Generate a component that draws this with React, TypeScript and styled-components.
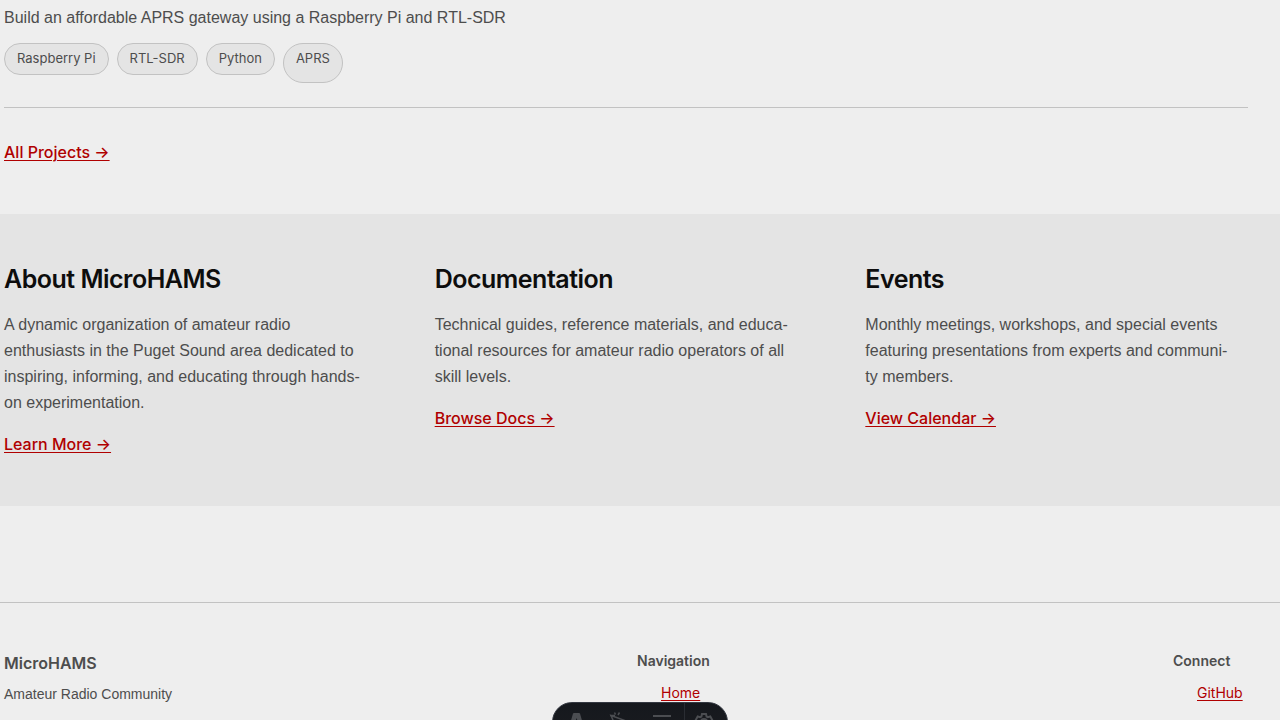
import React, { Fragment } from "react";
import styled, { createGlobalStyle } from "styled-components";

const GlobalStyle = createGlobalStyle`
  *, *::before, *::after { box-sizing: border-box; }
  body {
    margin: 0;
    background: #eeeeee;
    color: #4d4d4d;
    font-family: Inter, "Liberation Sans", sans-serif;
    font-size: 16px;
    line-height: 26px;
  }
  h2, h3, p, ul { margin: 0; }
`;

const Container = styled.div`
  padding: 0 32px 0 4px;
`;

const Project = styled.article`
  padding: 5px 0 24px;
  border-bottom: 1px solid #c2c2c2;
`;

const Text = styled.p`
  font-family: "Liberation Sans", Arial, sans-serif;
`;

const Tags = styled.ul`
  display: flex;
  gap: 8px;
  margin-top: 12px;
  padding: 0;
  list-style: none;
`;

const Tag = styled.li`
  margin-bottom: 8px;
  padding: 4px 12px 5px;
  border: 1px solid #c2c2c2;
  border-radius: 20px;
  background: #e4e4e4;
  font-size: 13px;
  line-height: 21px;

  &:last-child { margin-bottom: 0; }
`;

const Link = styled.a`
  color: #b00000;
  text-decoration: underline;
  text-decoration-thickness: 1px;
  text-underline-offset: 2px;
`;

const ActionLink = styled(Link)`
  font-weight: 500;
`;

const More = styled.p`
  padding: 31px 0 49px;
`;

const Band = styled.section`
  padding: 48px 32px 49px 4px;
  background: #e4e4e4;
`;

const Columns = styled.div`
  display: grid;
  grid-template-columns: repeat(3, 1fr);
  gap: 48px;
`;

const Column = styled.div`
  display: flex;
  flex-direction: column;
  align-items: flex-start;
`;

const Title = styled.h2`
  margin-bottom: 16px;
  color: #0d0d0d;
  font-size: 25px;
  font-weight: 600;
  line-height: 34px;
  letter-spacing: -0.02em;
`;

const Summary = styled(Text)`
  margin-bottom: 15px;
  white-space: nowrap;
`;

const Footer = styled.footer`
  display: flex;
  justify-content: space-between;
  margin-top: 96px;
  padding: 47px 32px 0 4px;
  border-top: 1px solid #c2c2c2;
  font-size: 14px;
  line-height: 22px;
`;

const BrandBlock = styled.div`
  min-width: 172px;
`;

const Brand = styled.h3`
  margin-bottom: 7px;
  font-size: 16px;
  font-weight: 600;
  line-height: 26px;
`;

const FooterNav = styled.nav`
  min-width: 75px;

  h3 {
    margin-bottom: 10px;
    font-size: 14px;
    font-weight: 600;
    line-height: 22px;
  }

  ul {
    padding-left: 24px;
    list-style: none;
  }
`;

const Toolbar = styled.div`
  position: fixed;
  left: 50%;
  bottom: -22px;
  display: flex;
  height: 40px;
  overflow: hidden;
  transform: translateX(-50%);
  border: 1px solid #343841;
  border-radius: 20px;
  background: linear-gradient(#15181d, #1b1c20);
`;

const ToolButton = styled.button`
  display: flex;
  align-items: center;
  justify-content: center;
  width: 44px;
  padding: 0;
  border: 0;
  background: none;
  color: #4b4d51;

  &:first-child { padding-left: 4px; }
  &:nth-child(3) { width: 43px; }
  &:last-child {
    width: 43px;
    padding-right: 4px;
    border-left: 1px solid #2a2d33;
  }
`;

const topics = [
  {
    title: "About MicroHAMS",
    lines: [
      "A dynamic organization of amateur radio",
      "enthusiasts in the Puget Sound area dedicated to",
      "inspiring, informing, and educating through hands-",
      "on experimentation.",
    ],
    link: "Learn More →",
  },
  {
    title: "Documentation",
    lines: [
      "Technical guides, reference materials, and educa-",
      "tional resources for amateur radio operators of all",
      "skill levels.",
    ],
    link: "Browse Docs →",
  },
  {
    title: "Events",
    lines: [
      "Monthly meetings, workshops, and special events",
      "featuring presentations from experts and communi-",
      "ty members.",
    ],
    link: "View Calendar →",
  },
];

export default function App() {
  return (
    <>
      <GlobalStyle />
      <main>
        <Container>
          <Project>
            <Text>Build an affordable APRS gateway using a Raspberry Pi and RTL-SDR</Text>
            <Tags>
              {["Raspberry Pi", "RTL-SDR", "Python", "APRS"].map((t) => (
                <Tag key={t}>{t}</Tag>
              ))}
            </Tags>
          </Project>
          <More>
            <ActionLink href="#projects">All Projects →</ActionLink>
          </More>
        </Container>
        <Band>
          <Columns>
            {topics.map((t) => (
              <Column key={t.title}>
                <Title>{t.title}</Title>
                <Summary>
                  {t.lines.map((line, i) => (
                    <Fragment key={line}>
                      {i > 0 && <br />}
                      {line}
                    </Fragment>
                  ))}
                </Summary>
                <ActionLink href="#more">{t.link}</ActionLink>
              </Column>
            ))}
          </Columns>
        </Band>
      </main>
      <Footer>
        <BrandBlock>
          <Brand>MicroHAMS</Brand>
          <Text>Amateur Radio Community</Text>
        </BrandBlock>
        <FooterNav>
          <h3>Navigation</h3>
          <ul>
            <li><Link href="#home">Home</Link></li>
          </ul>
        </FooterNav>
        <FooterNav>
          <h3>Connect</h3>
          <ul>
            <li><Link href="#github">GitHub</Link></li>
          </ul>
        </FooterNav>
      </Footer>
      <Toolbar>
        <ToolButton type="button" aria-label="Menu">
          <svg width="20" height="20" viewBox="0 0 20 20" fill="currentColor">
            <path d="M6 1.500Q6.300 1 7 1h5q.7 0 1 .5l4 14-4.300-1.200L9.500 6 7.300 14.300 2 15.500z" />
          </svg>
        </ToolButton>
        <ToolButton type="button" aria-label="Inspect">
          <svg width="20" height="20" viewBox="0 0 20 20" fill="none" stroke="currentColor" strokeWidth="1.500">
            <path d="M2 3.500l14 5-5.500 2.500-2.500 6zM5.500.5l1 2M9 3l1.500-2.500M1 3.500h5" />
          </svg>
        </ToolButton>
        <ToolButton type="button" aria-label="Audit">
          <svg width="20" height="20" viewBox="0 0 20 20" fill="none" stroke="currentColor" strokeWidth="2">
            <path d="M0 4h18M0 10h9M0 16h9M11.500 11l3 3 4-5" />
          </svg>
        </ToolButton>
        <ToolButton type="button" aria-label="Settings">
          <svg width="20" height="20" viewBox="0 0 20 20" fill="none" stroke="currentColor" strokeWidth="2">
            <path d="M8 2h4l.6 2.500 1.200.7L16.300 4.500l2 3.500-1.800 2 1.800 2-2 3.500-2.500-.7-1.200.7L12 18H8l-.6-2.500-1.200-.7-2.500.7-2-3.500 1.800-2-1.800-2 2-3.500 2.500.7 1.200-.7z" />
            <circle cx="10" cy="10" r="3" />
          </svg>
        </ToolButton>
      </Toolbar>
    </>
  );
}
